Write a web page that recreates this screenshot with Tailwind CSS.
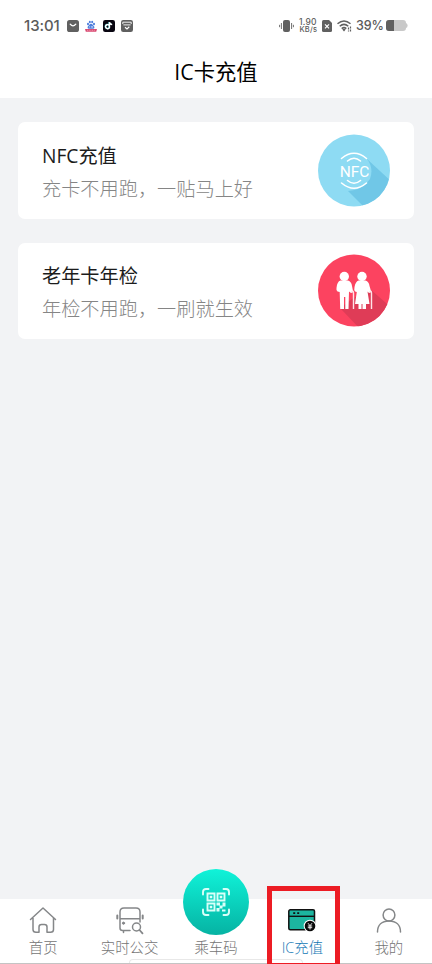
<!DOCTYPE html>
<html lang="zh-CN">
<head>
<meta charset="utf-8">
<meta name="viewport" content="width=device-width, initial-scale=1">
<title>IC卡充值</title>
<script src="https://cdn.jsdelivr.net/npm/@tailwindcss/browser@4"></script>
</head>
<body class="h-[964px] w-[432px] overflow-hidden bg-[#f2f3f5] font-['Open_Sans','Noto_Sans_CJK_SC',sans-serif]">
<div class="relative flex h-[964px] flex-col overflow-hidden">
  <header class="h-[98px] shrink-0 bg-white">
    <div class="flex h-[46px] items-center justify-between pt-[5px] pr-[24px] pl-[24px] text-[#5c5c5c]">
      <div class="flex items-center">
        <span class="w-[43px] font-['Inter',sans-serif] text-[15px] leading-5 font-medium tracking-[-0.1px] whitespace-nowrap">13:01</span>
        <div class="flex gap-[6px]">
          <svg class="h-3 w-3" viewBox="0 0 12 12"><rect width="12" height="12" rx="2.6" fill="#606060"/><path d="M3.2 4.2Q6 7.6 8.8 4.2" fill="none" stroke="#fff" stroke-width="1.3" stroke-linecap="round"/></svg>
          <svg class="h-3 w-3" viewBox="0 0 12 12"><g fill="#4f7fdc"><ellipse cx="3" cy="4" rx="1" ry="1.200"/><ellipse cx="4.800" cy="2" rx="1" ry="1.200"/><ellipse cx="7.200" cy="2" rx="1" ry="1.200"/><ellipse cx="9" cy="4" rx="1" ry="1.200"/><path d="M6 3.800C4.500 3.800 4 5.400 3 6.300C2.200 7.400 2.600 8.800 4 8.800H8C9.400 8.800 9.800 7.400 9 6.300C8 5.400 7.500 3.800 6 3.800Z"/></g><path d="M4.700 6v1.600M6.600 6v1.400h1V6" stroke="#dce8ff" stroke-width=".6" fill="none"/><path d="M0 9H12L11.200 11.800H.8Z" fill="#d84870"/><path d="M2 10.300H10" stroke="#f5b5c5" stroke-width=".7" stroke-dasharray="1 .7"/></svg>
          <svg class="h-3 w-3" viewBox="0 0 12 12"><rect width="12" height="12" rx="2.2" fill="#080510"/><g fill="none" stroke-width="1.4"><path d="M6 5.200A2 2 0 1 0 6.500 7.400V2.200C6.700 3.700 7.700 4.500 9.200 4.600" stroke="#54d7dc" transform="translate(-.4 -.2)"/><path d="M6 5.200A2 2 0 1 0 6.500 7.400V2.200C6.700 3.700 7.700 4.500 9.200 4.600" stroke="#fff"/></g></svg>
          <svg class="h-3 w-3" viewBox="0 0 12 12"><rect width="12" height="12" rx="2.2" fill="#606060"/><path d="M1.800 4V2.200H10.200V4M2.400 4.900H9.600" fill="none" stroke="#fff" stroke-width=".9"/><path d="M4 7.200L6 8.900L8.300 6.800" fill="none" stroke="#fff" stroke-width="1.200"/></svg>
        </div>
      </div>
      <div class="flex items-center">
        <svg class="h-[14px] w-[15px]" viewBox="0 0 15 14"><rect x="4" y="1" width="7" height="12" rx="2" fill="#606060"/><path d="M.6 5.800V8.200M2.400 4V10M12.600 4V10M14.400 5.800V8.200" stroke="#707070" stroke-width="1"/></svg>
        <svg class="ml-[5px] h-[17px] w-[18px] overflow-visible" viewBox="0 0 18 17"><g class="fill-[#5c5c5c] font-['Inter',sans-serif] font-medium"><text x="0" y="7.500" textLength="17.500" class="text-[8.5px]">1.90</text><text x="0.500" y="15.300" textLength="17.500" class="text-[7.5px]">KB/s</text></g></svg>
        <svg class="ml-[5px] h-3 w-[10px]" viewBox="0 0 10 12"><path d="M1.500 0H7L10 3V10.500Q10 12 8.500 12H1.500Q0 12 0 10.500V1.500Q0 0 1.500 0Z" fill="#606060"/><path d="M3 4.300L7 8.300M7 4.300L3 8.300" stroke="#fff" stroke-width="1.200"/></svg>
        <svg class="ml-[5px] h-3 w-[15px]" viewBox="0 0 15 12"><g fill="none" stroke="#606060" stroke-width="1.500"><path d="M.5 3.800Q7 -1.800 13.500 3.800M2.700 6.300Q7 2.500 11.300 6.300M4.700 8.600Q7 6.600 9.300 8.600"/></g><path d="M5.300 9.500Q7 8.200 8.700 9.500L7 11.500Z" fill="#606060"/><path d="M11.500 7.500V11.500M13.500 6.500V11.500" stroke="#606060" stroke-width="1.200" stroke-dasharray="2 1"/></svg>
        <span class="ml-[4px] w-[27px] pt-px font-['Inter',sans-serif] text-[12.5px] leading-5 font-medium tracking-[-0.1px] whitespace-nowrap">39%</span>
        <svg class="ml-[3px] h-[11px] w-[22px]" viewBox="0 0 22 11"><rect width="20" height="11" rx="3" fill="#c9c9c9"/><path d="M3 0H8V11H3Q0 11 0 8V3Q0 0 3 0Z" fill="#606060"/><path d="M20 3Q21.600 3.500 21.600 5.500T20 8Z" fill="#c9c9c9"/></svg>
      </div>
    </div>
    <h1 class="pt-px text-center text-[21.3px] leading-[50px] text-black">IC卡充值</h1>
  </header>

  <main class="flex flex-1 flex-col gap-6 px-[18px] pt-[24.4px]">
    <section class="flex h-[96.3px] items-center justify-between rounded-[7px] bg-white px-6">
      <div class="flex flex-col pt-[3px] text-[19.2px] leading-[33px] whitespace-nowrap">
        <h2 class="text-[#1c1c1c]">NFC充值</h2>
        <p class="font-light text-[#858585]">充卡不用跑，一贴马上好</p>
      </div>
      <svg class="h-[73px] w-[72px]" viewBox="0 0 72 73">
        <defs><clipPath id="blue-disc"><circle cx="36" cy="36.500" r="36"/></clipPath></defs>
        <circle cx="36" cy="36.500" r="36" fill="#8edbf3"/>
        <path d="M49 25L74 48V76H49L30 57Q45 56 52 45Q56 34 49 25Z" fill="#70c7e7" clip-path="url(#blue-disc)"/>
        <g fill="none" stroke="#fff" stroke-width="1.600" stroke-linecap="round"><path d="M23.500 24.500Q36 14 48.500 24.500M29.500 27Q36 21.500 42.500 27M23.500 49Q36 59.500 48.500 49M29.500 46.500Q36 52 42.500 46.500"/></g>
        <text x="36.500" y="42.700" text-anchor="middle" textLength="29.500" class="fill-white font-['Roboto',sans-serif] text-[15.5px]">NFC</text>
      </svg>
    </section>
    <section class="flex h-[96.3px] items-center justify-between rounded-[7px] bg-white px-6">
      <div class="flex flex-col pt-[3px] text-[19.2px] leading-[33px] whitespace-nowrap">
        <h2 class="text-[#1c1c1c]">老年卡年检</h2>
        <p class="font-light text-[#858585]">年检不用跑，一刷就生效</p>
      </div>
      <svg class="h-[73px] w-[72px]" viewBox="0 0 72 73">
        <defs><clipPath id="red-disc"><circle cx="36" cy="36.500" r="36"/></clipPath></defs>
        <circle cx="36" cy="36.500" r="36" fill="#fc4360"/>
        <path d="M52 35L76 56V78H45L22 54L34 45Z" fill="#df3c57" clip-path="url(#red-disc)"/>
        <g fill="#fff">
          <circle cx="26.300" cy="22.500" r="4.700"/>
          <path d="M22.500 26.500H30Q33.500 27.500 34 32L35 37Q35 39 33 39L31 37.500L30.500 55H27.300V43H26V55H22.200L21.700 38L19.500 37.500Q18 37 18.500 34Q19 27.500 22.500 26.500Z"/>
          <circle cx="44" cy="22.500" r="4.700"/>
          <path d="M40.500 26.500H47.500Q51 27.500 51.500 32L53 37Q53 39 51 39L49.500 37.500L51.500 50H48V55H44.500V50H43.500V55H40.500V50H37L38.800 38L37 37.500Q35.800 36.500 36.500 33Q37.500 27.500 40.500 26.500Z"/>
        </g>
        <path d="M33.500 38Q35.300 36 35.500 39V55M51.500 38Q53.300 36 53.500 39V55" fill="none" stroke="#ffe4e8" stroke-width="1.400"/>
      </svg>
    </section>
  </main>

  <nav class="relative grid h-[65px] shrink-0 grid-cols-5 bg-white text-[14.4px] leading-5 font-light text-[#747474]">
    <div class="absolute inset-x-0 bottom-0 h-px bg-[#c4c4c4]"></div>
    <div class="absolute bottom-px left-[129px] h-[4px] w-[174px] rounded-t-sm border border-b-0 border-[#e8e8e8] bg-white"></div>
    <a class="relative flex flex-col items-center pt-[7px]">
      <svg class="h-[29px] w-[28px]" viewBox="0 0 28 29" fill="none" stroke="#858789" stroke-width="1.500" stroke-linejoin="round" stroke-linecap="round"><path d="M1.500 13.500L14 2L26.500 13.500M4 12V23.500Q4 26.300 7 26.300H10V21Q10 18.500 12.500 18.500H15.500Q18 18.500 18 21V26.300H21.500Q24.500 26.300 24.500 23.500V12"/></svg>
      <span class="mt-[3px]">首页</span>
    </a>
    <a class="relative flex flex-col items-center pt-[7px]">
      <svg class="h-[29px] w-[28px]" viewBox="0 0 28 29" fill="none" stroke="#858789" stroke-width="1.500" stroke-linecap="round"><path d="M4 22V6Q4 2 8 2H20Q24 2 24 6V16M4 12.700H24M4 21V22Q4 24.500 6.500 24.500H14M7.500 24.500V26.500"/><path d="M1.300 9.500V12.500M26.700 9.500V12.500" stroke-width="2"/><circle cx="7.500" cy="17.200" r="1.100" fill="#858789" stroke-width="1"/><circle cx="20.500" cy="21" r="4"/><path d="M23.500 24L26.500 27.300" stroke-width="1.800"/></svg>
      <span class="mt-[3px]">实时公交</span>
    </a>
    <a class="relative flex flex-col items-center">
      <div class="-mt-[30px] flex h-[66px] w-[66px] shrink-0 items-center justify-center rounded-full bg-linear-to-b from-[#10f3d9] to-[#06b3a3]">
        <svg class="h-[28px] w-[28px]" viewBox="0 0 28 28" fill="none" stroke="#d9fff8">
          <path d="M1 6.500V4Q1 1 4 1H6.500M21.500 1H24Q27 1 27 4V6.500M27 21.500V24Q27 27 24 27H21.500M6.500 27H4Q1 27 1 24V21.500" stroke-width="1.900" stroke-linecap="round"/>
          <g stroke-width="1.900"><path d="M5.500 5.500H12.500V12.500H5.500ZM15.500 5.500H22.500V12.500H15.500ZM5.500 15.500H12.500V22.500H5.500Z"/></g>
          <path d="M7.700 7.700h2.600v2.600H7.700zM17.700 7.700h2.600v2.600h-2.600zM7.700 17.700h2.600v2.600H7.700zM14.500 14.500h3.500v3h-3.500zM17.500 17.500h3v3h-3zM20.500 14.500h3v4h-3zM14.500 20h3v3.500h-3zM20 21.500h3.500v2H20z" fill="#d9fff8" stroke="none"/>
        </svg>
      </div>
      <span class="mt-[3px]">乘车码</span>
    </a>
    <a class="relative flex flex-col items-center pt-[7px] text-[#1378b5]">
      <svg class="h-[29px] w-[28px]" viewBox="0 0 28 29"><rect x=".8" y="3.800" width="25.700" height="20" rx="1.500" fill="#1cb5a0" stroke="#111" stroke-width="1.500"/><path d="M1 10.300H26" stroke="#111" stroke-width="1.400"/><path d="M5.200 7.200H7.200M9.200 7.200H11.200" stroke="#111" stroke-width="1.700"/><circle cx="22" cy="20" r="6.300" fill="#fff"/><circle cx="22" cy="20" r="5.300" fill="#090909"/><path d="M20 17.200L22 19.700L24 17.200M19.800 20H24.200M19.800 21.700H24.200M22 19.800V23.500" fill="none" stroke="#fff" stroke-width=".9"/></svg>
      <span class="mt-[3px]">IC充值</span>
    </a>
    <a class="relative flex flex-col items-center pt-[7px]">
      <svg class="h-[29px] w-[28px]" viewBox="0 0 28 29" fill="none" stroke="#858789" stroke-width="1.500" stroke-linecap="round"><circle cx="14" cy="9" r="5.900"/><path d="M2.500 26C2.500 18.800 7 15 14 15S25.500 18.800 25.500 26"/></svg>
      <span class="mt-[3px]">我的</span>
    </a>
  </nav>
  <div class="absolute top-[886px] left-[267px] h-[82px] w-[73px] border-[5px] border-[#ec1c24]"></div>
</div>
</body>
</html>
